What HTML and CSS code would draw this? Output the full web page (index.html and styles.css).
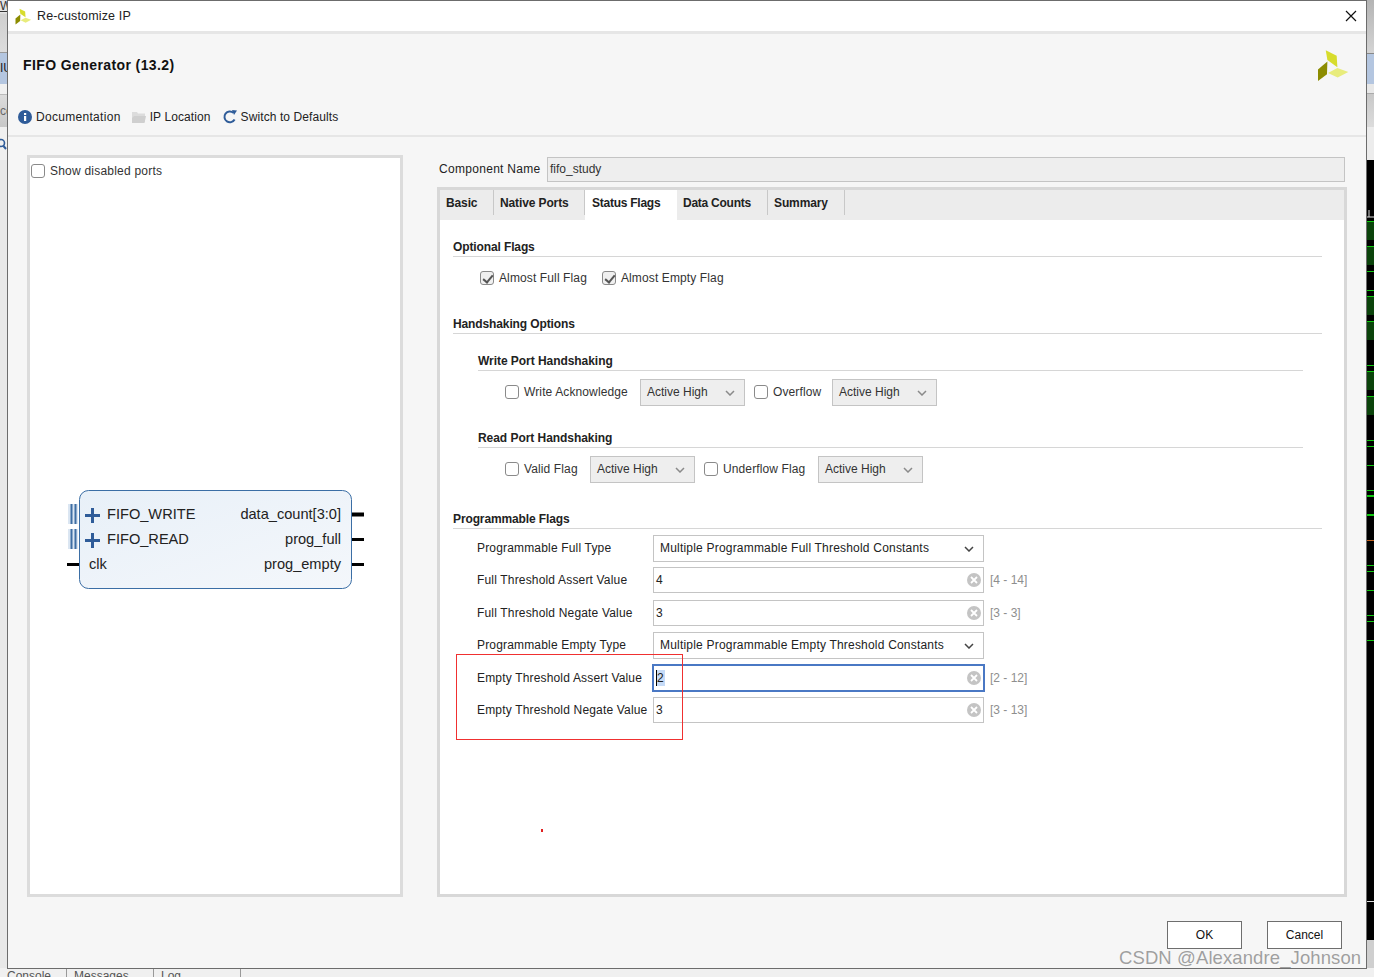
FILE: index.html
```html
<!DOCTYPE html>
<html lang="en">
<head>
    <meta charset="UTF-8">
    <title>Re-customize IP</title>
    <link rel="stylesheet" href="styles.css">
</head>
<body>
<div class="desktop">
    <div class="bg-left">
        <div class="bl-a"><span class="bl-w">W</span></div>
        <div class="bl-b">IU</div>
        <div class="bl-gap"></div>
        <div class="bl-c">co</div>
        <div class="bl-d">
            <svg class="bl-search" viewBox="0 0 10 12"><circle cx="1" cy="5" r="3.5" stroke="#2f5c99" stroke-width="1.6" fill="none"/><path d="M3.5 8 L6 11" stroke="#2f5c99" stroke-width="2"/></svg>
        </div>
        <div class="bl-e"></div>
    </div>
    <div class="bg-right">
        <div class="br-a"></div>
        <div class="br-b"></div>
        <div class="br-gap"></div>
        <div class="br-c"></div>
        <div class="br-gap2"></div>
        <svg class="br-wave" width="8" height="780" viewBox="0 0 8 780">
            <rect width="8" height="780" fill="#000"/>
            <path d="M3 50 V57 M0 57 H8" stroke="#ddd" fill="none"/>
            <g fill="#0b430b">
                <rect y="61" width="8" height="19"/>
                <rect y="86" width="8" height="19"/>
                <rect y="136" width="8" height="19"/>
                <rect y="161" width="8" height="19"/>
                <rect y="211" width="8" height="19"/>
                <rect y="236" width="8" height="19"/>
            </g>
            <g fill="#0fc80f">
                <rect y="61" width="8" height="1"/>
                <rect y="86" width="8" height="1"/>
                <rect y="111" width="8" height="1"/>
                <rect y="130" width="8" height="1"/>
                <rect y="136" width="8" height="1"/>
                <rect y="161" width="8" height="1"/>
                <rect y="205" width="8" height="1"/>
                <rect y="211" width="8" height="1"/>
                <rect y="236" width="8" height="1"/>
                <rect y="280" width="8" height="1"/>
                <rect y="286" width="8" height="1"/>
                <rect y="305" width="8" height="1"/>
                <rect y="330" width="8" height="1"/>
                <rect y="335" width="8" height="2"/>
                <rect y="354" width="8" height="2"/>
                <rect y="405" width="8" height="1"/>
                <rect y="411" width="8" height="1"/>
                <rect y="430" width="8" height="1"/>
                <rect y="455" width="8" height="1"/>
                <rect y="461" width="8" height="1"/>
                <rect y="480" width="8" height="1"/>
            </g>
            <rect y="380" width="8" height="1" fill="#c06020"/>
            <rect y="741" width="8" height="1" fill="#ddd"/>
        </svg>
        <div class="br-d"></div>
    </div>
    <div class="bg-bottom"><span>Console</span><span>Messages</span><span>Log</span></div>

    <div class="window">
        <div class="titlebar">
            <svg class="title-logo" viewBox="0 0 34 34"><polygon points="9,1.3 20.3,7 21,18.7 10.7,11.3" fill="#d7dc2c"/><polygon points="10.7,13 10.3,26 1,33 1,21" fill="#8c8c00"/><polygon points="21,19.7 32.3,23.7 21.3,29.3 11.3,24.7" fill="#e8ec7c"/></svg>
            <span class="title-text">Re-customize IP</span>
            <svg class="close-x" viewBox="0 0 12 12"><path d="M1 1 L11 11 M11 1 L1 11" stroke="#111" stroke-width="1.2" fill="none"/></svg>
        </div>
        <div class="header">
            <div class="header-top">
                <h1>FIFO Generator (13.2)</h1>
                <svg class="big-logo" viewBox="0 0 34 34"><polygon points="9,1.3 20.3,7 21,18.7 10.7,11.3" fill="#d7dc2c"/><polygon points="10.7,13 10.3,26 1,33 1,21" fill="#8c8c00"/><polygon points="21,19.7 32.3,23.7 21.3,29.3 11.3,24.7" fill="#e8ec7c"/></svg>
            </div>
            <div class="toolbar">
                <span class="tool tool-doc"><svg class="ico" viewBox="0 0 14 14"><circle cx="7" cy="7" r="7" fill="#2f5c99"/><rect x="6" y="6" width="2.2" height="5" fill="#fff"/><rect x="6" y="3" width="2.2" height="2" fill="#fff"/></svg>Documentation</span>
                <span class="tool"><svg class="ico" viewBox="0 0 14 14"><path d="M0 2 H5 L6 3.5 H13 V12 H0 Z" fill="#dcdcdc"/><path d="M2 6 H14 L12.5 13 H0 V8 Z" fill="#cfcfcf"/></svg>IP Location</span>
                <span class="tool"><svg class="ico" viewBox="0 0 14 14"><path d="M11.6 9.5 A5.4 5.4 0 1 1 10.4 2.8" stroke="#2f5c99" stroke-width="2" fill="none"/><polygon points="9,0 14,0.5 11,5" fill="#2f5c99"/></svg>Switch to Defaults</span>
            </div>
        </div>
        <div class="main">
            <div class="left-panel">
                <label class="check show-ports"><i class="box"></i>Show disabled ports</label>
                <svg class="symbol" width="330" height="110" viewBox="0 0 330 110">
                    <defs><linearGradient id="blockfill" x1="0" y1="0" x2="1" y2="1"><stop offset="0" stop-color="#e8f0f8"/><stop offset="1" stop-color="#f4f7fb"/></linearGradient></defs>
                    <rect x="40.5" y="4.5" width="272" height="98" rx="9" fill="url(#blockfill)" stroke="#3b6ea5"/>
                    <rect x="29" y="18" width="10" height="20" fill="#dbe6f2"/>
                    <rect x="29" y="43" width="10" height="20" fill="#dbe6f2"/>
                    <path d="M32.5 18 V38 M36.5 18 V38 M32.5 43 V63 M36.5 43 V63" stroke="#3f6ea3" stroke-width="2"/>
                    <path d="M46 29.5 H61 M53.5 22 V37 M46 54.5 H61 M53.5 47 V62" stroke="#2f5c99" stroke-width="3"/>
                    <path d="M28 78.5 H40" stroke="#000" stroke-width="3"/>
                    <path d="M313 28.5 H325" stroke="#000" stroke-width="4"/>
                    <path d="M313 53.5 H325 M313 78.5 H325" stroke="#000" stroke-width="3"/>
                    <text x="68" y="33">FIFO_WRITE</text>
                    <text x="68" y="58">FIFO_READ</text>
                    <text x="50" y="83">clk</text>
                    <text x="302" y="33" text-anchor="end">data_count[3:0]</text>
                    <text x="302" y="58" text-anchor="end">prog_full</text>
                    <text x="302" y="83" text-anchor="end">prog_empty</text>
                </svg>
            </div>
            <div class="right-panel">
                <div class="comp-row">
                    <span class="comp-label">Component Name</span>
                    <div class="comp-input">fifo_study</div>
                </div>
                <div class="tabbox">
                    <div class="tabs">
                        <span class="tab t-basic">Basic</span>
                        <span class="tab t-native">Native Ports</span>
                        <span class="tab t-status active">Status Flags</span>
                        <span class="tab t-data">Data Counts</span>
                        <span class="tab t-summary">Summary</span>
                    </div>
                    <div class="tab-body">
                        <h3 class="sec">Optional Flags</h3>
                        <div class="row flags">
                            <label class="check"><i class="box on"></i>Almost Full Flag</label>
                            <label class="check"><i class="box on"></i>Almost Empty Flag</label>
                        </div>

                        <h3 class="sec sec-hand">Handshaking Options</h3>
                        <h3 class="sec sub sub-write">Write Port Handshaking</h3>
                        <div class="row hand">
                            <label class="check w-ack"><i class="box"></i>Write Acknowledge</label>
                            <div class="combo gray">Active High<svg viewBox="0 0 10 6"><path d="M1 1 L5 5 L9 1" stroke="#8a8a8a" stroke-width="1.5" fill="none"/></svg></div>
                            <label class="check w-over"><i class="box"></i>Overflow</label>
                            <div class="combo gray">Active High<svg viewBox="0 0 10 6"><path d="M1 1 L5 5 L9 1" stroke="#8a8a8a" stroke-width="1.5" fill="none"/></svg></div>
                        </div>
                        <h3 class="sec sub sub-read">Read Port Handshaking</h3>
                        <div class="row hand">
                            <label class="check w-valid"><i class="box"></i>Valid Flag</label>
                            <div class="combo gray">Active High<svg viewBox="0 0 10 6"><path d="M1 1 L5 5 L9 1" stroke="#8a8a8a" stroke-width="1.5" fill="none"/></svg></div>
                            <label class="check w-under"><i class="box"></i>Underflow Flag</label>
                            <div class="combo gray">Active High<svg viewBox="0 0 10 6"><path d="M1 1 L5 5 L9 1" stroke="#8a8a8a" stroke-width="1.5" fill="none"/></svg></div>
                        </div>

                        <h3 class="sec sec-prog">Programmable Flags</h3>
                        <div class="form">
                            <div class="frow">
                                <span class="flabel">Programmable Full Type</span>
                                <div class="combo wide">Multiple Programmable Full Threshold Constants<svg viewBox="0 0 10 6"><path d="M1 1 L5 5 L9 1" stroke="#444" stroke-width="1.5" fill="none"/></svg></div>
                            </div>
                            <div class="frow">
                                <span class="flabel">Full Threshold Assert Value</span>
                                <div class="field">4<svg class="clear" viewBox="0 0 14 14"><circle cx="7" cy="7" r="7" fill="#c4c4c4"/><path d="M4 4 L10 10 M10 4 L4 10" stroke="#fff" stroke-width="1.8"/></svg></div>
                                <span class="range">[4 - 14]</span>
                            </div>
                            <div class="frow">
                                <span class="flabel">Full Threshold Negate Value</span>
                                <div class="field">3<svg class="clear" viewBox="0 0 14 14"><circle cx="7" cy="7" r="7" fill="#c4c4c4"/><path d="M4 4 L10 10 M10 4 L4 10" stroke="#fff" stroke-width="1.8"/></svg></div>
                                <span class="range">[3 - 3]</span>
                            </div>
                            <div class="frow">
                                <span class="flabel">Programmable Empty Type</span>
                                <div class="combo wide">Multiple Programmable Empty Threshold Constants<svg viewBox="0 0 10 6"><path d="M1 1 L5 5 L9 1" stroke="#444" stroke-width="1.5" fill="none"/></svg></div>
                            </div>
                            <div class="frow">
                                <span class="flabel">Empty Threshold Assert Value</span>
                                <div class="field focus"><span class="sel">2</span><svg class="clear" viewBox="0 0 14 14"><circle cx="7" cy="7" r="7" fill="#c4c4c4"/><path d="M4 4 L10 10 M10 4 L4 10" stroke="#fff" stroke-width="1.8"/></svg></div>
                                <span class="range">[2 - 12]</span>
                            </div>
                            <div class="frow">
                                <span class="flabel">Empty Threshold Negate Value</span>
                                <div class="field">3<svg class="clear" viewBox="0 0 14 14"><circle cx="7" cy="7" r="7" fill="#c4c4c4"/><path d="M4 4 L10 10 M10 4 L4 10" stroke="#fff" stroke-width="1.8"/></svg></div>
                                <span class="range">[3 - 13]</span>
                            </div>
                        </div>
                    </div>
                </div>
            </div>
        </div>
        <div class="footer">
            <button class="btn">OK</button>
            <button class="btn">Cancel</button>
        </div>
    </div>

    <div class="red-box"></div>
    <div class="red-dot"></div>
    <div class="watermark">CSDN @Alexandre_Johnson</div>
</div>
</body>
</html>
```

FILE: styles.css
```css
* {
    box-sizing: border-box;
}
html, body {
    margin: 0;
    padding: 0;
}
body {
    font-family: "Liberation Sans", Arial, sans-serif;
    font-size: 12px;
    color: #111;
}
.desktop {
    position: relative;
    width: 1374px;
    height: 977px;
    overflow: hidden;
    background: #f0f0f0;
}

/* stuff behind the dialog */
.bg-left {
    position: absolute;
    left: 0;
    top: 0;
    width: 8px;
    height: 977px;
    overflow: hidden;
    background: #ececec;
    color: #555;
}
.bl-a {
    height: 53px;
    background: linear-gradient(#e4e4e4 13px, #cfcfcf 14px, #dcdcdc);
    border-bottom: 1px solid #999;
}
.bl-w {
    display: block;
    line-height: 12px;
    color: #333;
    text-decoration: underline;
}
.bl-b {
    height: 31px;
    background: #b4c6e0;
    color: #222;
    line-height: 31px;
}
.bl-gap {
    height: 11px;
    background: #f0f0f0;
    border-bottom: 1px solid #bbb;
}
.bl-c {
    height: 32px;
    background: linear-gradient(#dcdcdc, #c8c8c8);
    color: #666;
    line-height: 32px;
}
.bl-d {
    height: 33px;
    background: #f0f0f0;
    padding-top: 11px;
}
.bl-search {
    display: block;
    width: 10px;
    height: 12px;
}
.bl-e {
    height: 817px;
    background: #e8e8e8;
}
.bg-right {
    position: absolute;
    left: 1366px;
    top: 0;
    width: 8px;
    height: 977px;
}
.br-a {
    height: 54px;
    background: linear-gradient(#b4b4b4, #d4d4d4);
    border-bottom: 1px solid #888;
}
.br-b {
    height: 30px;
    background: #b4c6e0;
}
.br-gap {
    height: 10px;
    background: #e8e8e8;
    border-bottom: 1px solid #aaa;
}
.br-c {
    height: 33px;
    background: linear-gradient(#c8c8c8, #dcdcdc);
}
.br-gap2 {
    height: 33px;
    background: #ececec;
}
.br-wave {
    display: block;
}
.br-d {
    height: 37px;
    background: #cfcfcf;
}
.bg-bottom {
    position: absolute;
    left: 0;
    top: 968px;
    width: 1374px;
    height: 9px;
    background: #f0f0f0;
    overflow: hidden;
    font-size: 12px;
    line-height: 16px;
    color: #555;
    display: flex;
}
.bg-bottom span {
    padding-left: 7px;
    border-right: 1px solid #999;
    white-space: nowrap;
}
.bg-bottom span:first-child {
    width: 67px;
}
.bg-bottom span:nth-child(2) {
    width: 87px;
}
.bg-bottom span:nth-child(3) {
    width: 87px;
}

/* dialog */
.window {
    position: absolute;
    left: 7px;
    top: 0;
    width: 1360px;
    height: 969px;
    background: #f6f6f6;
    border: 1px solid #6c6c6c;
    display: flex;
    flex-direction: column;
}
.titlebar {
    height: 33px;
    flex: none;
    background: #fff;
    border-bottom: 3px solid #e6e6e6;
    display: flex;
    align-items: center;
    padding-left: 7px;
}
.title-logo {
    width: 17px;
    height: 17px;
    margin-right: 5px;
}
.title-text {
    font-size: 12.5px;
    color: #222;
    letter-spacing: 0.15px;
}
.close-x {
    width: 12px;
    height: 12px;
    margin-left: auto;
    margin-right: 9px;
}
.header {
    height: 103px;
    flex: none;
    border-bottom: 2px solid #e6e6e6;
}
.header-top {
    height: 62px;
    display: flex;
    align-items: center;
    justify-content: space-between;
    padding: 0 16px 0 15px;
}
.header-top h1 {
    margin: 0;
    font-size: 14px;
    letter-spacing: 0.4px;
    color: #111;
}
.big-logo {
    width: 33px;
    height: 33px;
}
.toolbar {
    display: flex;
    padding-left: 10px;
    margin-top: 14px;
}
.tool {
    display: flex;
    align-items: center;
    margin-right: 12px;
    letter-spacing: 0.1px;
    color: #222;
}
.tool-doc {
    letter-spacing: 0.3px;
    margin-right: 11px;
}
.ico {
    width: 14px;
    height: 14px;
    margin-right: 4px;
}

.main {
    flex: 1;
    display: flex;
    padding: 18px 19px 0 19px;
    min-height: 0;
}
.left-panel {
    width: 376px;
    height: 742px;
    background: #fff;
    border: 3px solid #dcdcdc;
    flex: none;
    padding: 6px 0 0 1px;
}
.symbol {
    display: block;
    width: 330px;
    height: 110px;
    margin: 308px 0 0 8px;
    overflow: visible;
}
.symbol text {
    font-family: "Liberation Sans", Arial, sans-serif;
    font-size: 14.6px;
    fill: #222;
}
.right-panel {
    flex: none;
    width: 910px;
    margin-left: 34px;
}
.comp-row {
    display: flex;
    align-items: center;
    height: 25px;
    margin-top: 2px;
}
.comp-label {
    width: 108px;
    padding-left: 2px;
    padding-bottom: 1px;
    letter-spacing: 0.3px;
    color: #222;
}
.comp-input {
    width: 798px;
    height: 25px;
    margin-left: 2px;
    background: #eeeeee;
    border: 1px solid #c4c4c4;
    line-height: 23px;
    padding-left: 2px;
    color: #333;
}
.tabbox {
    margin-top: 5px;
    height: 710px;
    border: 3px solid #d8d8d8;
    background: #fff;
}
.tabs {
    height: 30px;
    background: #ececec;
    display: flex;
}
.tab {
    font-weight: bold;
    height: 25px;
    line-height: 26px;
    padding-left: 6px;
    border-right: 1px solid #c8c8c8;
    letter-spacing: -0.12px;
    color: #222;
}
.t-basic {
    width: 54px;
}
.t-native {
    width: 91px;
}
.t-status {
    width: 92px;
    letter-spacing: -0.25px;
}
.t-data {
    width: 91px;
    letter-spacing: -0.25px;
}
.t-summary {
    width: 77px;
}
.tab.active {
    background: #fff;
    height: 30px;
    border-right: 0;
    padding-left: 7px;
}
.tab-body {
    padding: 0 22px 0 13px;
}
.sec {
    margin: 0;
    font-size: 12px;
    height: 17px;
    line-height: 14px;
    border-bottom: 1px solid #d6d6d6;
    letter-spacing: -0.12px;
    color: #222;
}
.tab-body > .sec:first-child {
    margin-top: 20px;
}
.sec-hand {
    margin-top: 31px;
}
.sec.sub {
    margin-left: 25px;
    margin-right: 19px;
    letter-spacing: -0.05px;
}
.sub-write {
    margin-top: 20px;
}
.sub-read {
    margin-top: 25px;
}
.sec-prog {
    margin-top: 29px;
}
.row {
    display: flex;
    align-items: center;
}
.flags {
    padding-left: 27px;
    margin-top: 13px;
    height: 16px;
    gap: 15px;
}
.hand {
    margin-top: 8px;
    height: 27px;
    padding-left: 52px;
}
.hand .check {
    padding-bottom: 1px;
}
.check {
    display: inline-flex;
    align-items: center;
    letter-spacing: 0.12px;
    color: #333;
}
.show-ports {
    display: flex;
    letter-spacing: 0.22px;
}
.box {
    display: inline-block;
    width: 14px;
    height: 14px;
    border: 1px solid #8a8a8a;
    border-radius: 3px;
    background: #fff;
    margin-right: 5px;
    position: relative;
    flex: none;
}
.box.on {
    background: #f0f0f0;
}
.box.on::after {
    content: "";
    position: absolute;
    left: 4px;
    top: 1px;
    width: 4px;
    height: 8px;
    border: solid #555;
    border-width: 0 2px 2px 0;
    transform: rotate(40deg);
}
.w-ack {
    width: 135px;
}
.w-over {
    width: 78px;
    margin-left: 9px;
}
.w-valid {
    width: 85px;
}
.w-under {
    width: 114px;
    margin-left: 9px;
}
.combo {
    position: relative;
    height: 27px;
    line-height: 24px;
    padding-left: 6px;
    border: 1px solid #c4c4c4;
    color: #333;
}
.combo svg {
    position: absolute;
    right: 9px;
    top: 10px;
    width: 10px;
    height: 6px;
}
.combo.gray {
    width: 105px;
    background: #eeeeee;
}
.combo.wide {
    width: 331px;
    background: #fff;
    letter-spacing: 0.2px;
    color: #222;
}
.form {
    padding-left: 24px;
    margin-top: 6px;
}
.frow {
    display: flex;
    align-items: center;
    height: 26px;
    margin-bottom: 6.4px;
}
.flabel {
    width: 176px;
    flex: none;
    letter-spacing: 0.17px;
    color: #222;
}
.field {
    position: relative;
    width: 331px;
    height: 26px;
    background: #fff;
    border: 1px solid #c4c4c4;
    line-height: 24px;
    padding-left: 2px;
    color: #222;
}
.field.focus {
    width: 333px;
    height: 28px;
    margin: 0 -1px;
    border: 2px solid #4a78c4;
    padding-left: 2px;
}
.sel {
    display: inline-block;
    background: #c6dbf7;
    border-left: 1px solid #000;
    line-height: 16px;
    padding-right: 1px;
}
.clear {
    position: absolute;
    right: 2px;
    top: 5px;
    width: 14px;
    height: 14px;
}
.range {
    margin-left: 6px;
    color: #8e8e8e;
}
.footer {
    height: 64px;
    flex: none;
    display: flex;
    justify-content: flex-end;
    padding: 17px 24px 0 0;
    gap: 25px;
}
.btn {
    width: 75px;
    height: 28px;
    background: #fff;
    border: 1px solid #6e6e6e;
    font-family: inherit;
    font-size: 12px;
    color: #111;
    padding: 0;
}

/* screenshot annotations */
.red-box {
    position: absolute;
    left: 456px;
    top: 654px;
    width: 227px;
    height: 86px;
    border: 1px solid #f03030;
}
.red-dot {
    position: absolute;
    left: 541px;
    top: 829px;
    width: 2px;
    height: 3px;
    background: #e02020;
}
.watermark {
    position: absolute;
    left: 1119px;
    top: 947px;
    font-size: 18.5px;
    color: rgba(120, 120, 120, 0.7);
    letter-spacing: 0.1px;
    white-space: nowrap;
}
```
